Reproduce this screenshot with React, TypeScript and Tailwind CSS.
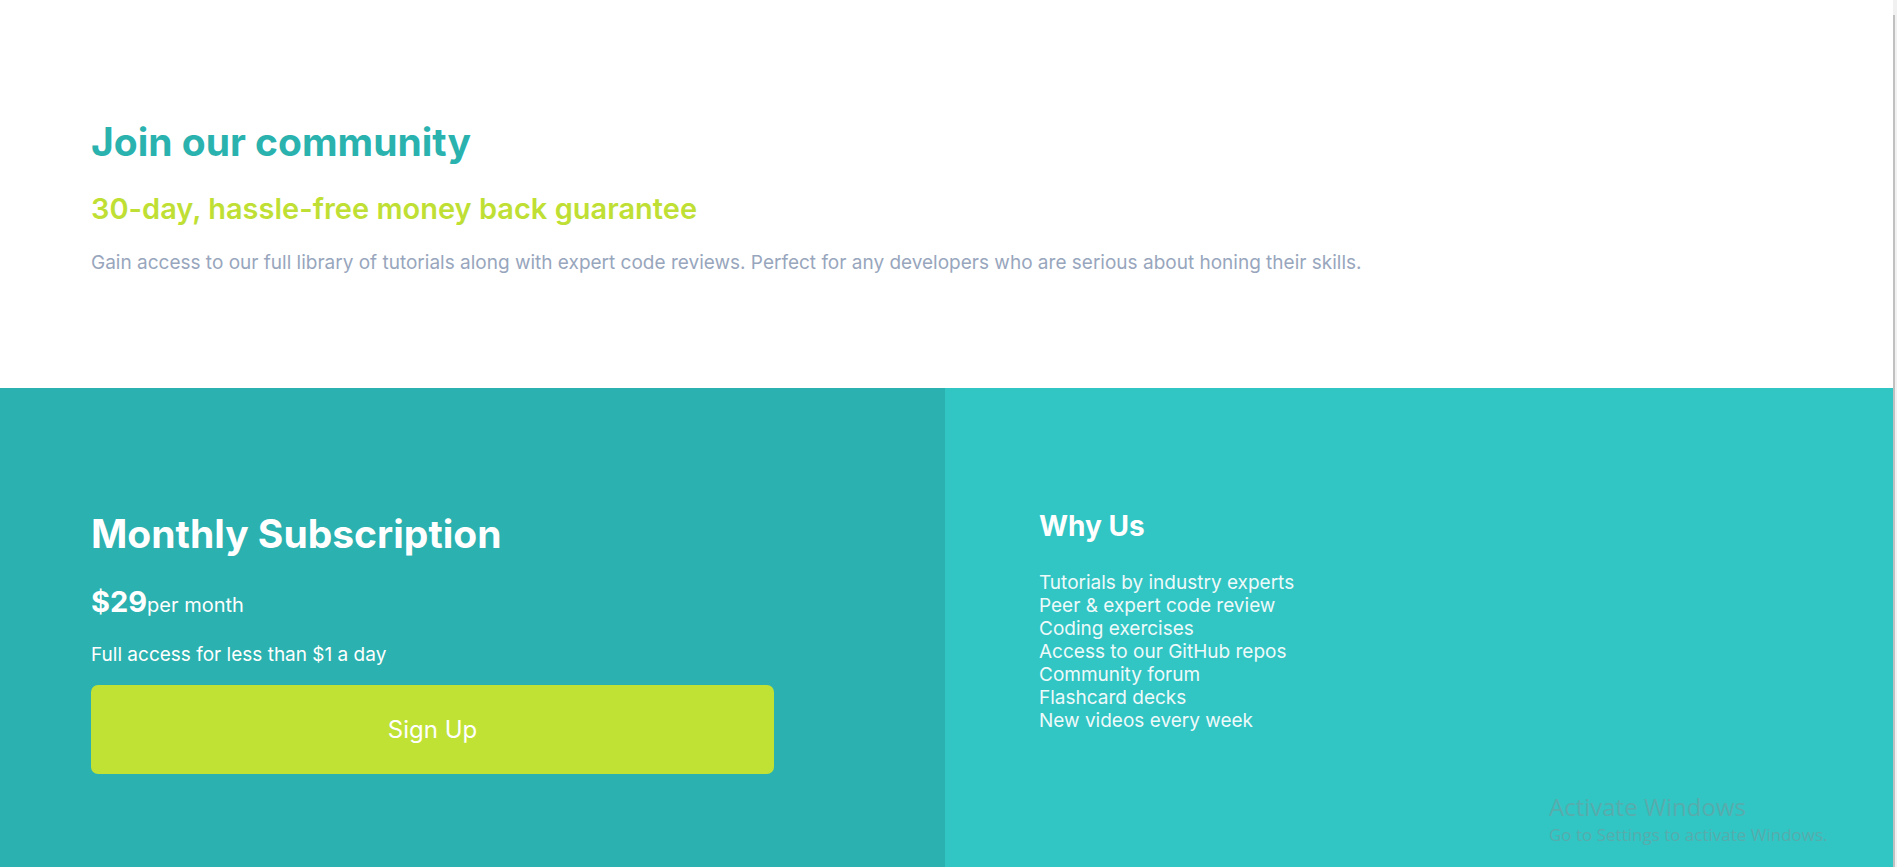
import React from "react";

const features = [
  "Tutorials by industry experts",
  "Peer & expert code review",
  "Coding exercises",
  "Access to our GitHub repos",
  "Community forum",
  "Flashcard decks",
  "New videos every week",
];

export default function App() {
  return (
    <div className="flex min-h-screen w-full font-['Inter',sans-serif]">
      <main className="flex-1 flex flex-col">
        {/* Intro */}
        <section className="h-[388px] bg-white pl-[91px] pt-[120px]">
          <h1 className="text-[39px] leading-[44px] font-bold text-[#2ab2af]">
            Join our community
          </h1>
          <h2 className="mt-[28px] text-[29px] leading-[34px] font-semibold text-[#c0df34]">
            30-day, hassle-free money back guarantee
          </h2>
          <p className="mt-[24px] text-[19px] leading-[26px] text-[#98a6bd]">
            Gain access to our full library of tutorials along with expert code reviews. Perfect for any
            developers who are serious about honing their skills.
          </p>
        </section>

        {/* Pricing */}
        <section className="relative flex flex-1 min-h-[479px]">
          <div className="w-[945px] bg-[#2bb1af] pl-[91px] pt-[124px] text-white">
            <h3 className="text-[39px] leading-[44px] font-bold">Monthly Subscription</h3>
            <div className="mt-[30px] flex items-baseline">
              <span className="text-[29px] leading-[32px] font-bold">$29</span>
              <span className="text-[20px] leading-[24px]">per month</span>
            </div>
            <p className="mt-[25px] text-[19px] leading-[24px]">Full access for less than $1 a day</p>
            <button className="mt-[18px] h-[89px] w-[683px] rounded-[7px] bg-[#c0e234] text-[24px] text-white">
              Sign Up
            </button>
          </div>

          <div className="flex-1 bg-[#31c5c4] pl-[94px] pt-[120px] text-white">
            <h3 className="text-[28px] leading-[36px] font-bold">Why Us</h3>
            <ul className="mt-[27px] text-[19px] leading-[23px] text-[#eefafa]">
              {features.map((f) => (
                <li key={f}>{f}</li>
              ))}
            </ul>
          </div>

          {/* OS watermark */}
          <div className="absolute left-[1549px] top-[404px] font-['Open_Sans',sans-serif] text-[#58acac]">
            <div className="text-[24px] leading-[30px]">Activate Windows</div>
            <div className="mt-[2px] text-[17px] leading-[22px]">Go to Settings to activate Windows.</div>
          </div>
        </section>
      </main>

      {/* scrollbar strip */}
      <aside className="w-[4px] bg-[#f1f1f1] flex flex-col">
        <div className="h-[15px]" />
        <div className="flex-1 w-[2px] bg-[#c1c1c1]" />
      </aside>
    </div>
  );
}
